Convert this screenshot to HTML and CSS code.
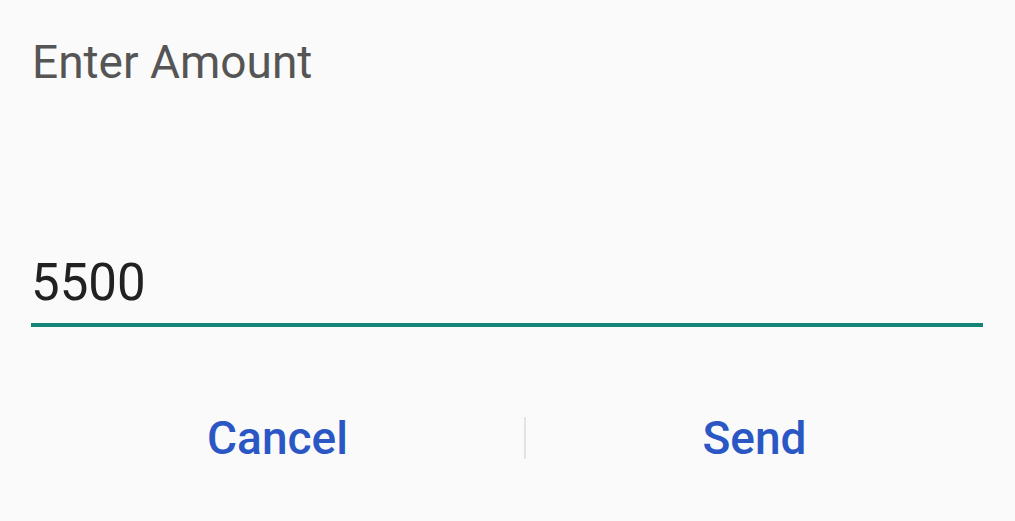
FILE: index.html
```html
<!DOCTYPE html>
<html>
<head>
<meta charset="utf-8">
<link rel="stylesheet" href="styles.css">
</head>
<body>
<div class="dialog">
  <div class="title">Enter Amount</div>
  <div class="field">
    <div class="value">5500</div>
    <div class="underline"></div>
  </div>
  <div class="actions">
    <div class="btn btn-left">Cancel</div>
    <div class="divider"></div>
    <div class="btn btn-right">Send</div>
  </div>
</div>
</body>
</html>
```
FILE: styles.css
```css
html, body {
  margin: 0;
  padding: 0;
  background: #fafafa;
  width: 1015px;
  height: 521px;
  overflow: hidden;
  font-family: Roboto, "Liberation Sans", sans-serif;
}
.dialog {
  display: flex;
  flex-direction: column;
  padding: 0 32px 0 31px;
}
.title {
  color: #555555;
  font-size: 46px;
  line-height: 54px;
  margin-top: 35px;
  padding-left: 1px;
}
.field {
  margin-top: 164px;
  display: flex;
  flex-direction: column;
}
.value {
  color: #212121;
  font-size: 51px;
  line-height: 60px;
  padding-left: 0;
}
.underline {
  height: 4px;
  background: #138577;
  margin-top: 10px;
}
.actions {
  display: flex;
  align-items: center;
  margin-top: 85px;
}
.btn {
  text-align: center;
  color: #2b57c4;
  font-weight: 500;
  font-size: 46px;
  line-height: 52px;
}
.btn-left {
  flex: 0 0 493px;
}
.btn-right {
  flex: 1;
}
.divider {
  width: 2px;
  height: 42px;
  background: #e3e3e3;
}
```
